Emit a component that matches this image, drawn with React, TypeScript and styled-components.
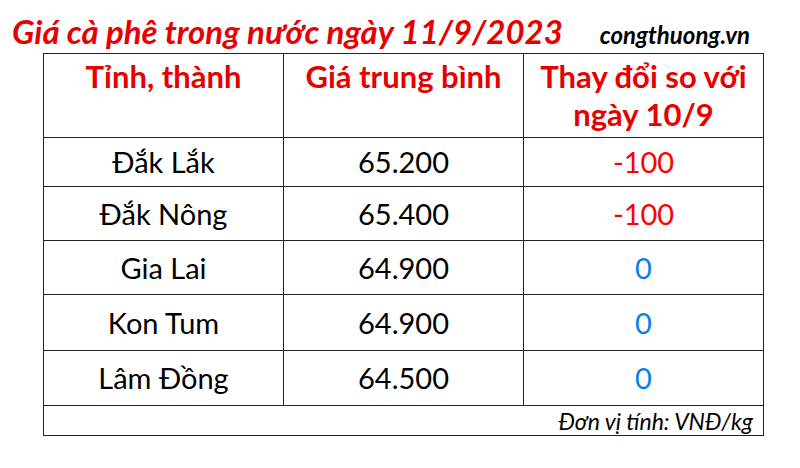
import React from 'react';
import styled, { createGlobalStyle } from 'styled-components';

interface PriceRow {
  province: string;
  price: string;
  change: number;
}

const rows: PriceRow[] = [
  { province: 'Đắk Lắk', price: '65.200', change: -100 },
  { province: 'Đắk Nông', price: '65.400', change: -100 },
  { province: 'Gia Lai', price: '64.900', change: 0 },
  { province: 'Kon Tum', price: '64.900', change: 0 },
  { province: 'Lâm Đồng', price: '64.500', change: 0 },
];

const rowHeights = [49, 54, 54, 56, 55];

const App: React.FC = () => (
  <>
    <GlobalStyle />
    <Page>
      <TitleBar>
        <Title>Giá cà phê trong nước ngày 11/9/2023</Title>
        <Site>congthuong.vn</Site>
      </TitleBar>
      <PriceTable>
        <thead>
          <HeadRow>
            <HeadCell>Tỉnh, thành</HeadCell>
            <HeadCell>Giá trung bình</HeadCell>
            <HeadCell>
              Thay đổi so với
              <br />
              ngày 10/9
            </HeadCell>
          </HeadRow>
        </thead>
        <tbody>
          {rows.map((row, i) => (
            <tr key={row.province} style={{ height: rowHeights[i] }}>
              <Cell>{row.province}</Cell>
              <Cell>{row.price}</Cell>
              <ChangeCell negative={row.change < 0}>{row.change}</ChangeCell>
            </tr>
          ))}
          <FootRow>
            <UnitCell colSpan={3}>Đơn vị tính: VNĐ/kg</UnitCell>
          </FootRow>
        </tbody>
      </PriceTable>
    </Page>
  </>
);

export default App;

// Styled components
const GlobalStyle = createGlobalStyle`
    html, body {
        margin: 0;
        padding: 0;
        background: #ffffff;
    }
    body {
        font-family: Lato, "Open Sans", sans-serif;
    }
`;

const Page = styled.div`
    width: 800px;
    height: 468px;
    overflow: hidden;
    background: #ffffff;
`;

const TitleBar = styled.div`
    display: flex;
    align-items: baseline;
    height: 53px;
    padding-left: 12px;
    box-sizing: border-box;
`;

const Title = styled.h1`
    margin: 12px 0 0 0;
    font-size: 33px;
    font-weight: 700;
    font-style: italic;
    color: #e60000;
    line-height: 38px;
    white-space: nowrap;
`;

const Site = styled.span`
    margin-left: 37px;
    font-size: 24px;
    font-weight: 700;
    font-style: italic;
    color: #000000;
    white-space: nowrap;
`;

const PriceTable = styled.table`
    margin-left: 43px;
    width: 721px;
    border-collapse: collapse;
    table-layout: fixed;
`;

const HeadRow = styled.tr`
    height: 84px;
`;

const HeadCell = styled.th`
    border: 1px solid #222222;
    padding: 3px 0 0 0;
    vertical-align: top;
    text-align: center;
    font-size: 31px;
    font-weight: 700;
    line-height: 38px;
    color: #e60000;
`;

const Cell = styled.td`
    border: 1px solid #222222;
    padding: 0;
    text-align: center;
    font-size: 29px;
    line-height: 34px;
    color: #000000;
`;

const ChangeCell = styled(Cell)<{ negative: boolean }>`
    color: ${({ negative }) => (negative ? '#ff0000' : '#0a7ee0')};
`;

const FootRow = styled.tr`
    height: 30px;
`;

const UnitCell = styled.td`
    border: 1px solid #222222;
    padding: 0 10px 0 0;
    text-align: right;
    font-size: 23px;
    line-height: 26px;
    font-style: italic;
    color: #000000;
`;
